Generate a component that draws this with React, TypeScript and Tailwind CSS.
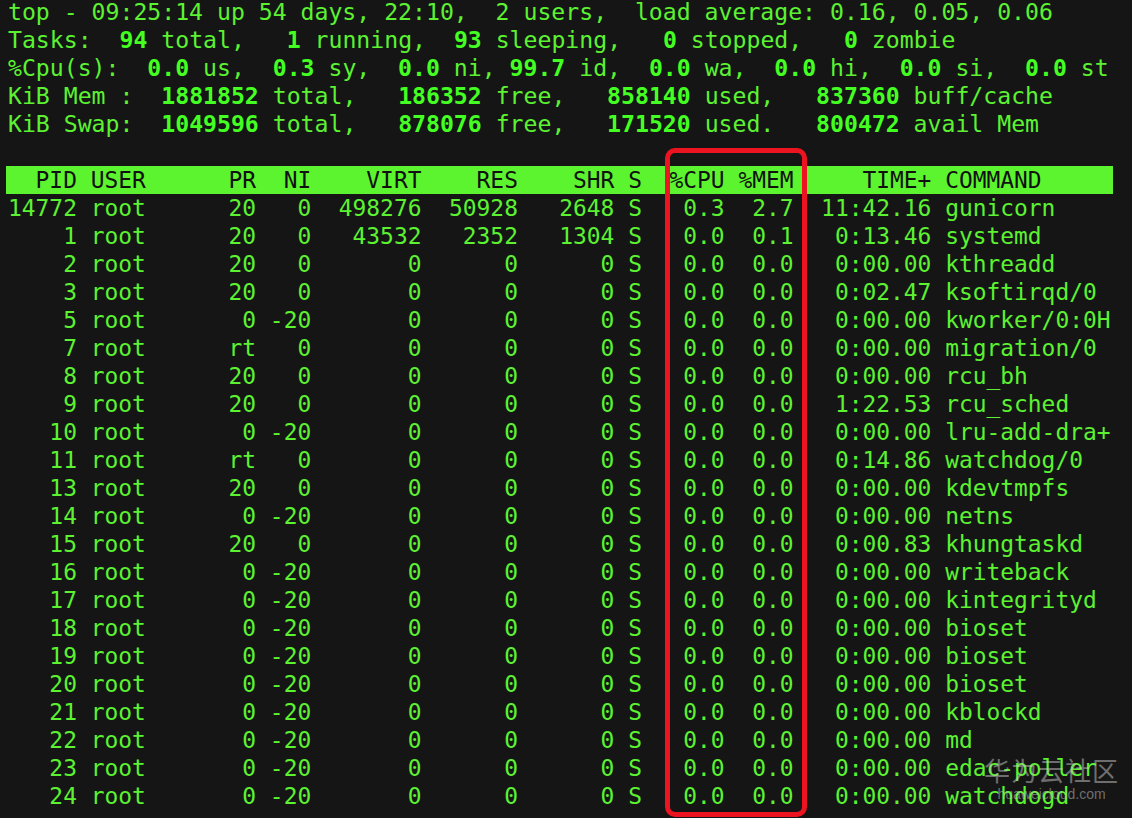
import React from "react";

type Proc = [string, string, string, string, string, string, string, string, string, string, string];

const procs: Proc[] = [
  ["14772", "20", "0", "498276", "50928", "2648", "S", "0.3", "2.7", "11:42.16", "gunicorn"],
  ["1", "20", "0", "43532", "2352", "1304", "S", "0.0", "0.1", "0:13.46", "systemd"],
  ["2", "20", "0", "0", "0", "0", "S", "0.0", "0.0", "0:00.00", "kthreadd"],
  ["3", "20", "0", "0", "0", "0", "S", "0.0", "0.0", "0:02.47", "ksoftirqd/0"],
  ["5", "0", "-20", "0", "0", "0", "S", "0.0", "0.0", "0:00.00", "kworker/0:0H"],
  ["7", "rt", "0", "0", "0", "0", "S", "0.0", "0.0", "0:00.00", "migration/0"],
  ["8", "20", "0", "0", "0", "0", "S", "0.0", "0.0", "0:00.00", "rcu_bh"],
  ["9", "20", "0", "0", "0", "0", "S", "0.0", "0.0", "1:22.53", "rcu_sched"],
  ["10", "0", "-20", "0", "0", "0", "S", "0.0", "0.0", "0:00.00", "lru-add-dra+"],
  ["11", "rt", "0", "0", "0", "0", "S", "0.0", "0.0", "0:14.86", "watchdog/0"],
  ["13", "20", "0", "0", "0", "0", "S", "0.0", "0.0", "0:00.00", "kdevtmpfs"],
  ["14", "0", "-20", "0", "0", "0", "S", "0.0", "0.0", "0:00.00", "netns"],
  ["15", "20", "0", "0", "0", "0", "S", "0.0", "0.0", "0:00.83", "khungtaskd"],
  ["16", "0", "-20", "0", "0", "0", "S", "0.0", "0.0", "0:00.00", "writeback"],
  ["17", "0", "-20", "0", "0", "0", "S", "0.0", "0.0", "0:00.00", "kintegrityd"],
  ["18", "0", "-20", "0", "0", "0", "S", "0.0", "0.0", "0:00.00", "bioset"],
  ["19", "0", "-20", "0", "0", "0", "S", "0.0", "0.0", "0:00.00", "bioset"],
  ["20", "0", "-20", "0", "0", "0", "S", "0.0", "0.0", "0:00.00", "bioset"],
  ["21", "0", "-20", "0", "0", "0", "S", "0.0", "0.0", "0:00.00", "kblockd"],
  ["22", "0", "-20", "0", "0", "0", "S", "0.0", "0.0", "0:00.00", "md"],
  ["23", "0", "-20", "0", "0", "0", "S", "0.0", "0.0", "0:00.00", "edac-poller"],
  ["24", "0", "-20", "0", "0", "0", "S", "0.0", "0.0", "0:00.00", "watchdogd"],
];

const fmt = (p: Proc) => {
  const [pid, pr, ni, virt, res, shr, s, cpu, mem, time, cmd] = p;
  return (
    pid.padStart(5) +
    " " +
    "root".padEnd(8) +
    " " +
    pr.padStart(3) +
    " " +
    ni.padStart(3) +
    " " +
    virt.padStart(7) +
    " " +
    res.padStart(6) +
    " " +
    shr.padStart(6) +
    " " +
    s +
    " " +
    cpu.padStart(5) +
    " " +
    mem.padStart(4) +
    " " +
    time.padStart(9) +
    " " +
    cmd
  );
};

const B = ({ children }: { children: React.ReactNode }) => (
  <b className="font-bold text-[#44ff22]">{children}</b>
);

const App = () => {
  return (
    <div className="relative w-[1132px] h-[818px] overflow-hidden bg-[#151515]">
      <div className="-mt-[2px] pl-2 whitespace-pre leading-[28px] text-[#5cf232] font-['DejaVu_Sans_Mono',monospace]">
        {/* summary area */}
        <div className="text-[23.15px]">
          <div>top - 09:25:14 up 54 days, 22:10,  2 users,  load average: 0.16, 0.05, 0.06</div>
          <div>
            Tasks:  <B>94</B> total,   <B>1</B> running,  <B>93</B> sleeping,   <B>0</B> stopped,   <B>0</B> zombie
          </div>
          <div>
            %Cpu(s):  <B>0.0</B> us,  <B>0.3</B> sy,  <B>0.0</B> ni, <B>99.7</B> id,  <B>0.0</B> wa,  <B>0.0</B> hi,  <B>0.0</B> si,  <B>0.0</B> st
          </div>
          <div>
            KiB Mem :  <B>1881852</B> total,   <B>186352</B> free,   <B>858140</B> used,   <B>837360</B> buff/cache
          </div>
          <div>
            KiB Swap:  <B>1049596</B> total,   <B>878076</B> free,   <B>171520</B> used.   <B>800472</B> avail Mem
          </div>
          <div> </div>
        </div>

        {/* process table */}
        <div className="text-[22.9px]">
          <div className="-ml-[2px] pl-[2px] w-[calc(80ch+4px)] bg-[#5cf42e] text-[#111]">
            {"  PID USER      PR  NI    VIRT    RES    SHR S  %CPU %MEM     TIME+ COMMAND"}
          </div>
          {procs.map((p, i) => (
            <div key={i}>{fmt(p)}</div>
          ))}
        </div>
      </div>

      <div className="absolute left-[665px] top-[148px] w-[142px] h-[669px] rounded-[10px] border-[5px] border-[#ec1420]" />

      <div className="absolute left-[984px] top-[754px] flex flex-col items-center text-[#c8c8c8]/50 font-['Noto_Sans_CJK_SC',sans-serif]">
        <span className="text-[26px] leading-[32px] tracking-[1px]">华为云社区</span>
        <span className="text-[14px] leading-[16px] font-['Liberation_Sans',sans-serif]">huaweicloud.com</span>
      </div>
    </div>
  );
};

export default App;
